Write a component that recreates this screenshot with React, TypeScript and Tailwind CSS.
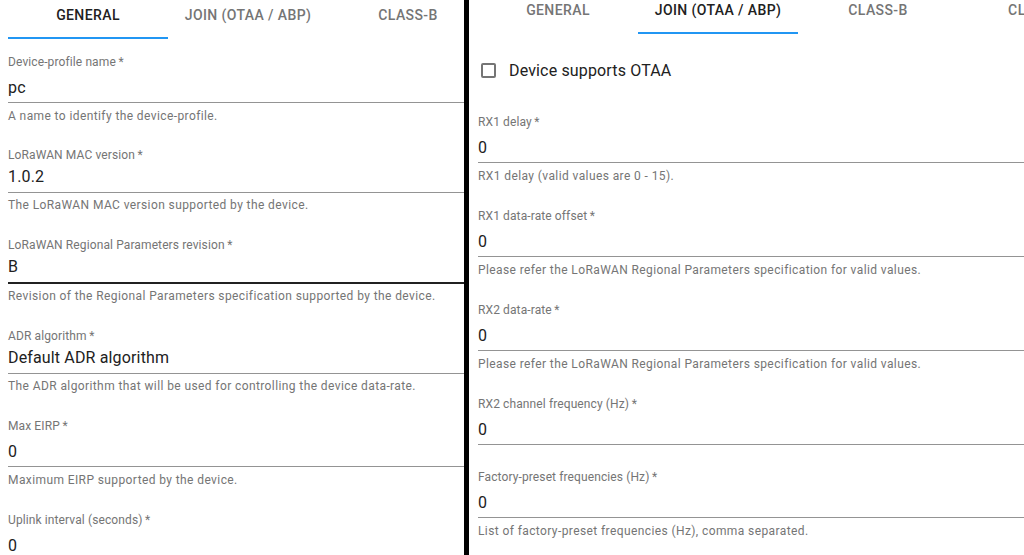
import React from 'react';

type FieldProps = {
  label: string;
  value: string;
  helper?: string;
  select?: boolean;
  hovered?: boolean;
  spacing?: string;
};

const Field = ({ label, value, helper, select, hovered, spacing }: FieldProps) => {
  const wrapperPad =
    spacing ?? (select ? 'pb-[24px]' : helper ? 'pb-[24px]' : 'pb-[25px]');

  return (
    <div className={`w-full ${wrapperPad}`}>
      <div className="whitespace-nowrap text-[12px] leading-[14px] tracking-[0.11px] text-[#757575]">
        {label}
        {'\u2009*'}
      </div>
      <div
        className={`whitespace-nowrap text-[16px] leading-[19px] tracking-[0.15px] text-[#212121] ${
          select ? 'mt-[5px] pb-[6px]' : 'mt-[9px] pb-[5px]'
        } ${hovered ? 'border-b-2 border-[#212121]' : 'border-b border-[#949494]'}`}
      >
        {value}
      </div>
      {helper && (
        <div
          className={`whitespace-nowrap text-[12px] leading-[18px] tracking-[0.4px] text-[#757575] ${
            select ? 'mt-[3px]' : 'mt-[4px]'
          }`}
        >
          {helper}
        </div>
      )}
    </div>
  );
};

type TabBarProps = {
  tabs: string[];
  active: number;
  className?: string;
};

const TabBar = ({ tabs, active, className }: TabBarProps) => (
  <div className={`flex h-12 ${className ?? ''}`}>
    {tabs.map((tab, i) => (
      <div
        key={tab}
        className={`relative flex w-[160px] shrink-0 items-center justify-center text-[14px] font-medium uppercase tracking-[0.4px] ${
          i === active ? 'text-[#212121]' : 'text-[#757575]'
        }`}
      >
        {tab}
        {i === active && (
          <span className="absolute inset-x-0 bottom-0 h-[2px] bg-[#2196f3]" />
        )}
      </div>
    ))}
  </div>
);

const TABS = ['General', 'Join (OTAA / ABP)', 'Class-B', 'Class-C'];

const App = () => {
  return (
    <div className="flex h-[555px] w-[1024px] overflow-hidden bg-white font-[Roboto,sans-serif]">
      {/* general tab */}
      <div className="w-[464px] shrink-0 overflow-hidden pl-[8px]">
        <TabBar tabs={TABS} active={0} className="-mt-[9px]" />
        <div className="mt-[16px] w-[600px]">
          <Field
            spacing="pb-[23px]"
            label="Device-profile name"
            value="pc"
            helper="A name to identify the device-profile."
          />
          <Field
            select
            label="LoRaWAN MAC version"
            value="1.0.2"
            helper="The LoRaWAN MAC version supported by the device."
          />
          <Field
            select
            hovered
            label="LoRaWAN Regional Parameters revision"
            value="B"
            helper="Revision of the Regional Parameters specification supported by the device."
          />
          <Field
            select
            label="ADR algorithm"
            value="Default ADR algorithm"
            helper="The ADR algorithm that will be used for controlling the device data-rate."
          />
          <Field
            label="Max EIRP"
            value="0"
            helper="Maximum EIRP supported by the device."
          />
          <Field label="Uplink interval (seconds)" value="0" />
        </div>
      </div>

      <div className="w-[5px] shrink-0 bg-black" />

      {/* join tab */}
      <div className="min-w-0 flex-1 overflow-hidden pl-[9px]">
        <TabBar tabs={TABS} active={1} className="-mt-[14px]" />
        <div className="mt-[29px] flex h-[15px] items-center">
          <span className="ml-[3px] box-border h-[15px] w-[15px] rounded-[2px] border-2 border-[#757575]" />
          <span className="ml-[13px] whitespace-nowrap text-[16px] leading-[19px] tracking-[0.15px] text-[#212121]">
            Device supports OTAA
          </span>
        </div>
        <div className="mt-[37px] w-[700px]">
          <Field
            label="RX1 delay"
            value="0"
            helper="RX1 delay (valid values are 0 - 15)."
          />
          <Field
            label="RX1 data-rate offset"
            value="0"
            helper="Please refer the LoRaWAN Regional Parameters specification for valid values."
          />
          <Field
            label="RX2 data-rate"
            value="0"
            helper="Please refer the LoRaWAN Regional Parameters specification for valid values."
          />
          <Field label="RX2 channel frequency (Hz)" value="0" />
          <Field
            label="Factory-preset frequencies (Hz)"
            value="0"
            helper="List of factory-preset frequencies (Hz), comma separated."
          />
        </div>
      </div>
    </div>
  );
};

export default App;
